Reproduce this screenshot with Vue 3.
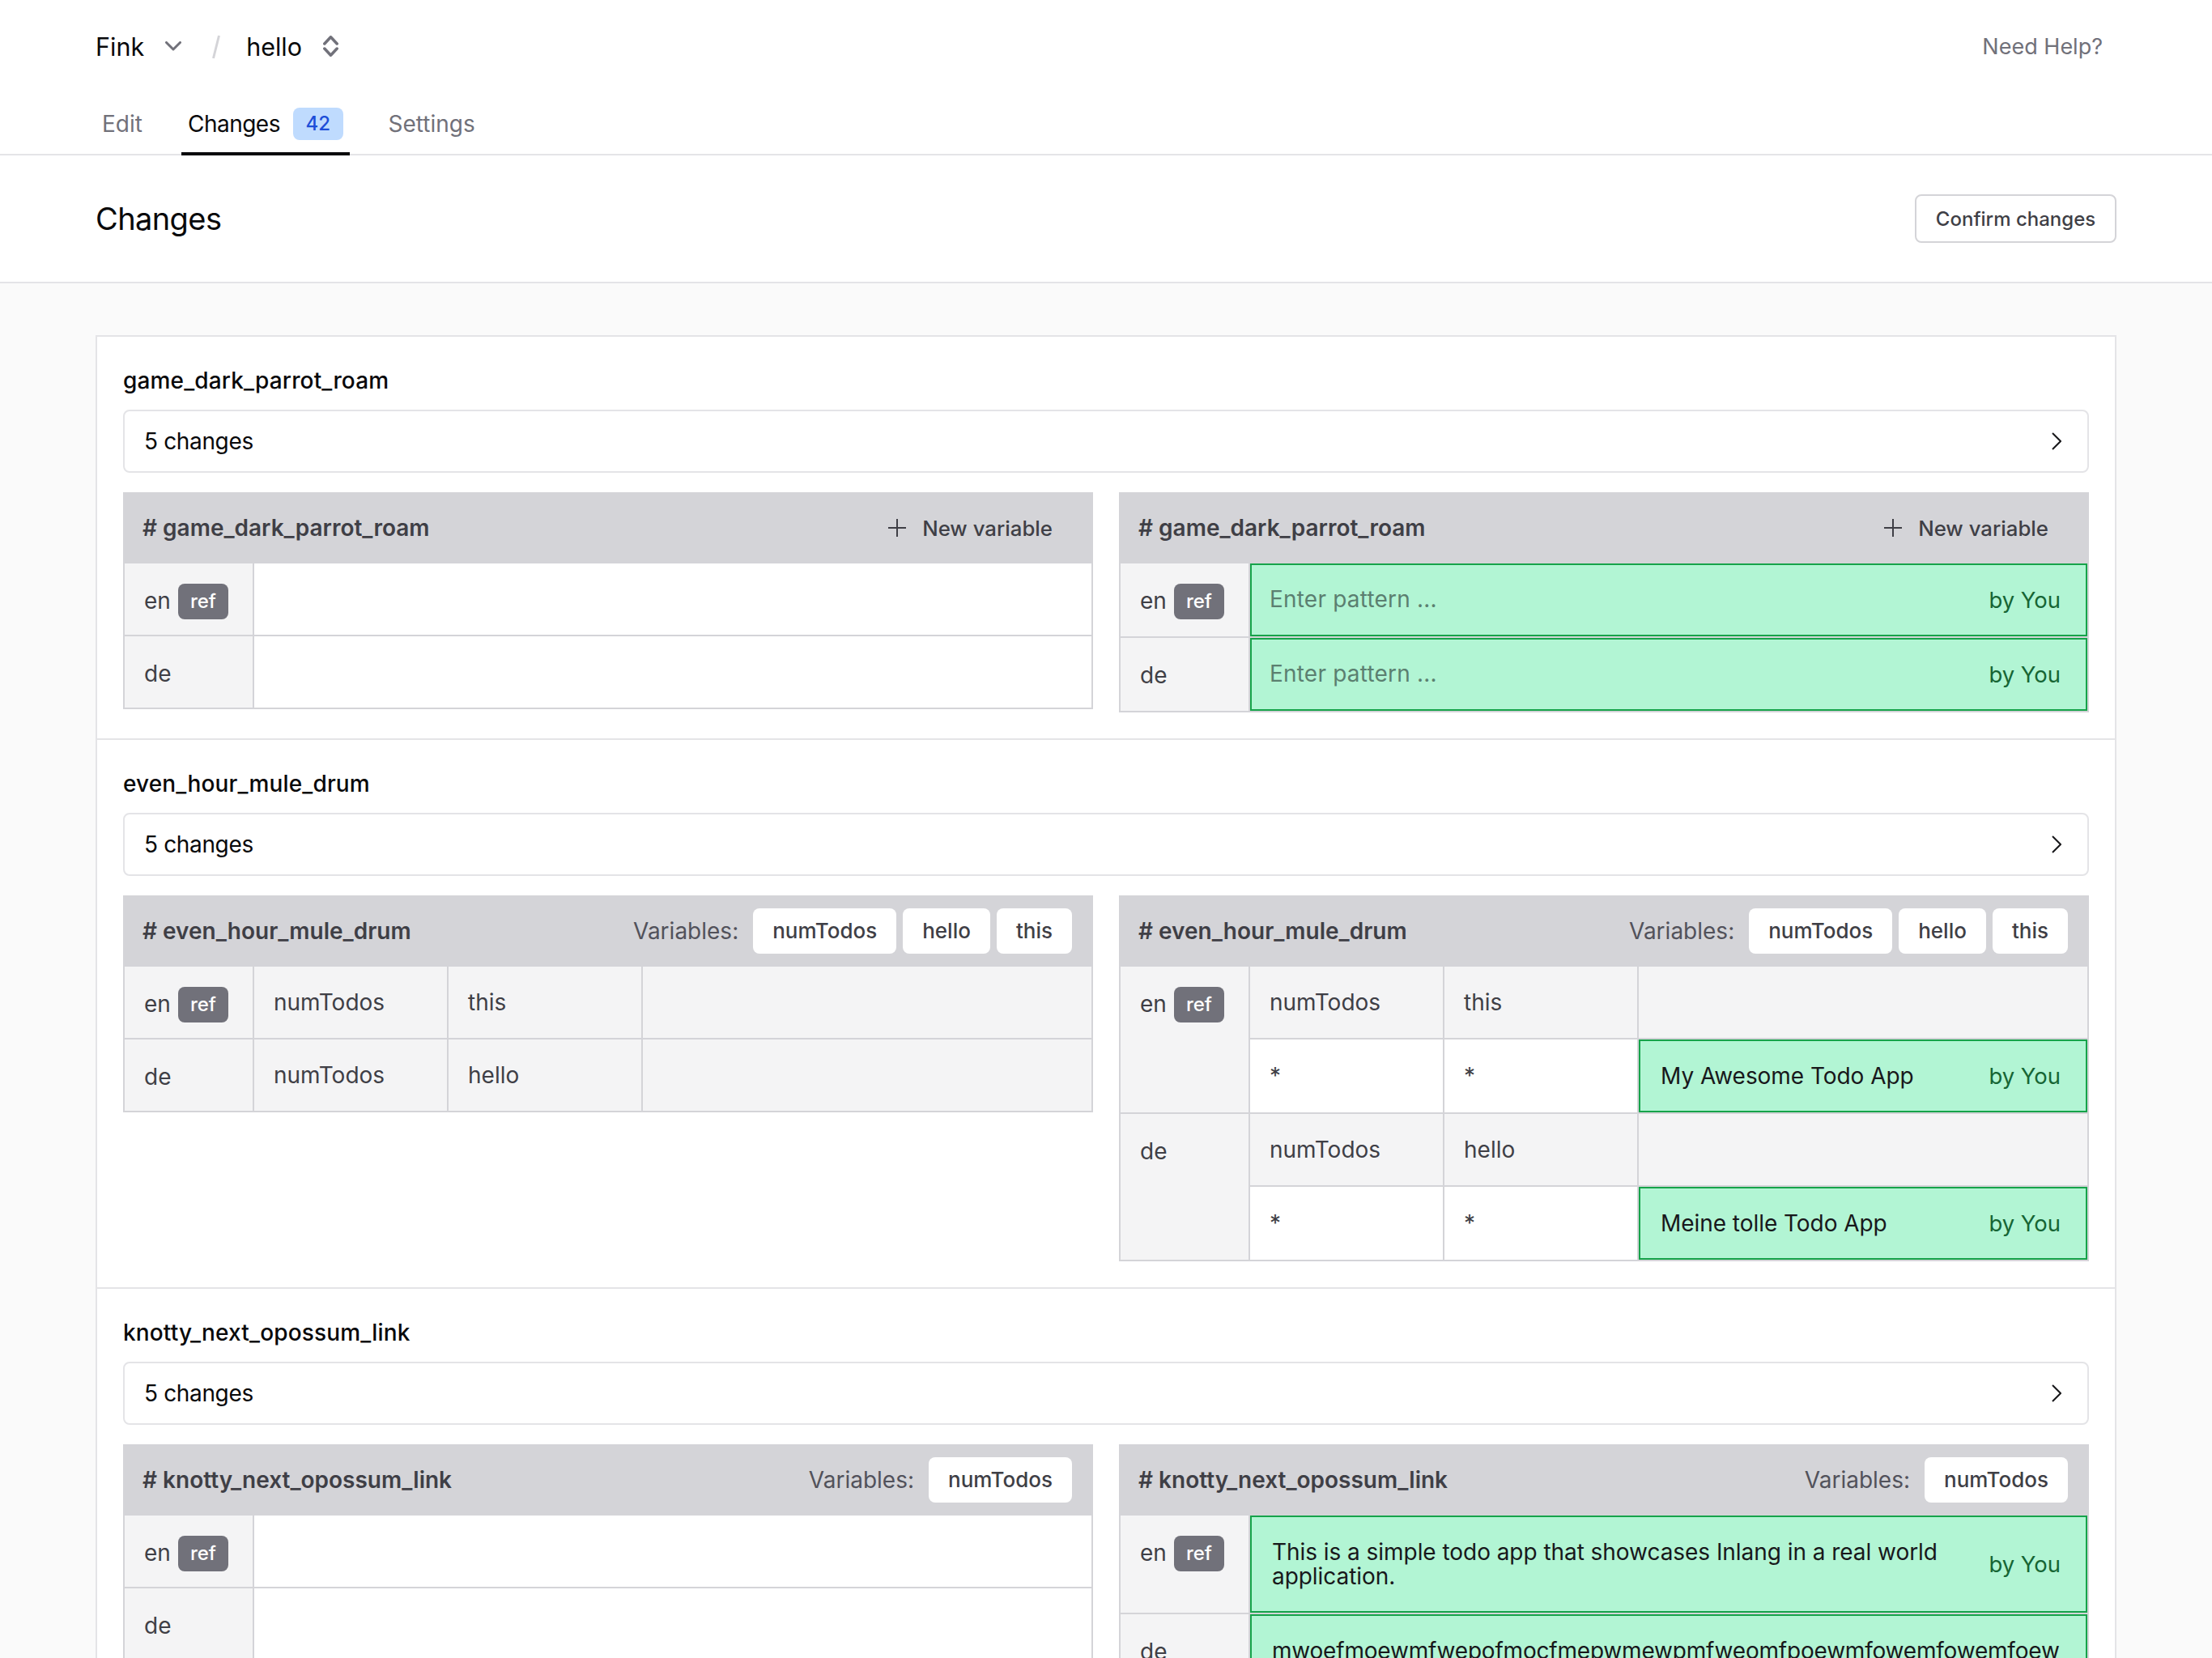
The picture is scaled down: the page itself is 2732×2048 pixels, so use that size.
<script setup>
const tabs = [
  { label: 'Edit' },
  { label: 'Changes', count: 42, active: true },
  { label: 'Settings' },
]

const selector = (...cells) => ({ cells, selector: true })
const edited = (value, cells = [], extra = {}) => ({ cells, value, edited: true, ...extra })
const empty = { cells: [] }

const sections = [
  {
    name: 'game_dark_parrot_roam',
    vars: [],
    before: [
      { lang: 'en', ref: true, rows: [empty] },
      { lang: 'de', rows: [empty] },
    ],
    after: [
      { lang: 'en', ref: true, rows: [edited('Enter pattern ...', [], { placeholder: true })] },
      { lang: 'de', rows: [edited('Enter pattern ...', [], { placeholder: true })] },
    ],
  },
  {
    name: 'even_hour_mule_drum',
    vars: ['numTodos', 'hello', 'this'],
    before: [
      { lang: 'en', ref: true, rows: [selector('numTodos', 'this')] },
      { lang: 'de', rows: [selector('numTodos', 'hello')] },
    ],
    after: [
      { lang: 'en', ref: true, rows: [selector('numTodos', 'this'), edited('My Awesome Todo App', ['*', '*'])] },
      { lang: 'de', rows: [selector('numTodos', 'hello'), edited('Meine tolle Todo App', ['*', '*'])] },
    ],
  },
  {
    name: 'knotty_next_opossum_link',
    vars: ['numTodos'],
    before: [
      { lang: 'en', ref: true, rows: [empty] },
      { lang: 'de', rows: [empty] },
    ],
    after: [
      {
        lang: 'en',
        ref: true,
        rows: [edited('This is a simple todo app that showcases Inlang in a real world application.')],
      },
      {
        lang: 'de',
        rows: [edited('mwoefmoewmfwepofmocfmepwmewpmfweomfpoewmfowemfowemfoew', [], { long: true })],
      },
    ],
  },
]
</script>

<template>
  <div class="page">
    <header class="nav">
      <div class="nav-top">
        <span class="crumb">Fink</span>
        <svg class="chevron-down" width="20" height="12" viewBox="0 0 20 12" fill="none">
          <path d="M1.5 1.5 10 10l8.5-8.5" stroke="#71717a" stroke-width="3" stroke-linecap="round" stroke-linejoin="round" />
        </svg>
        <svg class="slash" width="10" height="30" viewBox="0 0 10 30" fill="none">
          <path d="M8.5 1 1.5 29" stroke="#d4d4d8" stroke-width="3" />
        </svg>
        <span class="crumb">hello</span>
        <svg class="updown" width="19" height="26" viewBox="0 0 19 26" fill="none">
          <path d="M1.8 10 9.5 1.8l7.7 8.2M1.8 16l7.7 8.2 7.7-8.2" stroke="#71717a" stroke-width="3.5" stroke-linecap="round" stroke-linejoin="round" />
        </svg>
        <a class="help">Need Help?</a>
      </div>
      <nav class="tabs">
        <div v-for="tab in tabs" :key="tab.label" :class="['tab', { active: tab.active }]">
          {{ tab.label }}
          <span v-if="tab.count" class="count">{{ tab.count }}</span>
        </div>
      </nav>
    </header>

    <div class="title-bar">
      <h1>Changes</h1>
      <button class="confirm">Confirm changes</button>
    </div>

    <main class="content">
      <div class="card">
        <section v-for="section in sections" :key="section.name" class="section">
          <h2>{{ section.name }}</h2>
          <div class="accordion">
            <span>5 changes</span>
            <svg width="12" height="22" viewBox="0 0 12 22" fill="none">
              <path d="M1 1l10 10L1 21" stroke="#18181b" stroke-width="2" />
            </svg>
          </div>

          <div class="compare">
            <div v-for="side in ['before', 'after']" :key="side" class="table">
              <div class="table-head">
                <span class="message-id"># {{ section.name }}</span>
                <div v-if="section.vars.length" class="vars">
                  <span class="vars-label">Variables:</span>
                  <span v-for="name in section.vars" :key="name" class="var">{{ name }}</span>
                </div>
                <div v-else class="new-var">
                  <svg width="22" height="22" viewBox="0 0 22 22" fill="none">
                    <path d="M11 0v22M0 11h22" stroke="#3f3f46" stroke-width="2" />
                  </svg>
                  New variable
                </div>
              </div>

              <div v-for="item in section[side]" :key="item.lang" class="lang">
                <div class="lang-name">
                  <span>{{ item.lang }}</span>
                  <span v-if="item.ref" class="ref">ref</span>
                </div>
                <div class="lang-rows">
                  <div v-for="(row, i) in item.rows" :key="i" :class="['row', { selector: row.selector }]">
                    <div v-for="(cell, j) in row.cells" :key="j" class="cell">{{ cell }}</div>
                    <div :class="['value', { edited: row.edited, long: row.long }]">
                      <template v-if="row.edited">
                        <span :class="['pattern', { placeholder: row.placeholder }]">{{ row.value }}</span>
                        <span class="by">by You</span>
                      </template>
                    </div>
                  </div>
                </div>
              </div>
            </div>
          </div>
        </section>
      </div>
    </main>
  </div>
</template>

<style>
html,
body {
  margin: 0;
  background: #fff;
}
#app {
  height: 2048px;
  overflow: hidden;
}
</style>

<style scoped>
.page {
  font-family: Inter, "Liberation Sans", sans-serif;
  font-size: 28px;
  color: #18181b;
}

.nav {
  height: 192px;
  box-sizing: border-box;
  border-bottom: 2px solid #e4e4e7;
}

.nav-top {
  height: 114px;
  display: flex;
  align-items: center;
  padding: 0 135px 0 118px;
}

.crumb {
  font-size: 30.5px;
  color: #09090b;
}

.chevron-down {
  margin-left: 26px;
}

.slash {
  margin: 2px 32px 0 38px;
}

.updown {
  margin-left: 26px;
}

.help {
  margin-left: auto;
  font-size: 27px;
  color: #71717a;
}

.tabs {
  display: flex;
  gap: 40px;
  padding-left: 118px;
  height: 78px;
}

.tab {
  display: flex;
  align-items: center;
  gap: 16px;
  padding: 0 8px;
  color: #71717a;
  box-sizing: border-box;
  height: 78px;
}

.tab.active {
  color: #09090b;
  letter-spacing: -0.5px;
  border-bottom: 4px solid #09090b;
  padding-top: 4px;
}

.count {
  background: #bfdbfe;
  color: #1d4ed8;
  font-size: 24px;
  font-weight: 500;
  letter-spacing: 0;
  line-height: 40px;
  padding: 0 15.5px;
  border-radius: 8px;
}

.title-bar {
  height: 158px;
  box-sizing: border-box;
  display: flex;
  align-items: center;
  justify-content: space-between;
  padding: 0 118px;
  border-bottom: 2px solid #e4e4e7;
}

h1 {
  margin: 0;
  font-size: 38px;
  letter-spacing: -0.6px;
  font-weight: 400;
  color: #09090b;
}

.confirm {
  height: 60px;
  width: 249px;
  padding: 0;
  background: #fff;
  border: 2px solid #d4d4d8;
  border-radius: 8px;
  font-family: inherit;
  font-size: 24px;
  font-weight: 500;
  color: #3f3f46;
}

.content {
  background: #fafafa;
  padding: 64px 118px;
}

.card {
  background: #fff;
  border: 2px solid #e4e4e7;
}

.section {
  padding: 0 32px 32px;
  border-bottom: 2px solid #e4e4e7;
}

h2 {
  margin: 0;
  padding: 37px 0 19px;
  font-size: 28px;
  letter-spacing: 0.15px;
  line-height: 34px;
  font-weight: 500;
  color: #09090b;
}

.accordion {
  height: 78px;
  box-sizing: border-box;
  display: flex;
  align-items: center;
  justify-content: space-between;
  padding: 0 32px 0 24px;
  margin-bottom: 24px;
  border: 2px solid #e4e4e7;
  border-radius: 8px;
  letter-spacing: -0.35px;
  color: #09090b;
}

.compare {
  display: grid;
  grid-template-columns: 1fr 1fr;
  gap: 32px;
  align-items: start;
}

.table {
  border: 2px solid #d4d4d8;
  border-top: 0;
}

.table-head {
  height: 88px;
  margin: 0 -2px;
  background: #d4d4d8;
  display: flex;
  align-items: center;
  justify-content: space-between;
  padding: 0 26px 0 24px;
  color: #3f3f46;
}

.message-id {
  font-weight: 600;
}

.vars {
  display: flex;
  align-items: center;
  gap: 8px;
}

.vars-label {
  color: #52525b;
  margin-right: 10px;
}

.var {
  background: #fff;
  font-size: 26px;
  font-weight: 500;
  line-height: 56px;
  padding: 0 24px;
  border-radius: 8px;
}

.new-var {
  display: flex;
  align-items: center;
  gap: 20px;
  margin-right: 24px;
  font-size: 25.8px;
  font-weight: 500;
}

.lang {
  display: flex;
}

.lang + .lang {
  border-top: 2px solid #d4d4d8;
}

.lang-name {
  flex: 0 0 160px;
  box-sizing: border-box;
  display: flex;
  align-items: flex-start;
  gap: 9px;
  padding: 29px 0 0 24px;
  color: #3f3f46;
  background: #f4f4f5;
  border-right: 2px solid #d4d4d8;
}

.ref {
  background: #71717a;
  color: #fff;
  font-size: 24px;
  font-weight: 500;
  line-height: 44px;
  padding: 0 15px;
  border-radius: 8px;
  margin-top: -4px;
}

.lang-rows {
  flex: 1;
  min-width: 0;
}

.row {
  display: flex;
  min-height: 88px;
}

.row + .row {
  border-top: 2px solid #d4d4d8;
}

.row.selector {
  background: #f4f4f5;
}

.cell {
  flex: 0 0 240px;
  box-sizing: border-box;
  display: flex;
  align-items: center;
  padding-left: 24px;
  color: #3f3f46;
  border-right: 2px solid #d4d4d8;
}

.value {
  flex: 1;
  min-width: 0;
  display: flex;
  align-items: center;
  justify-content: space-between;
  gap: 32px;
}

.value.edited {
  padding: 28px 31px 28px 25px;
  background: #b2f5d4;
  border: 2px solid #16a34a;
  line-height: 30px;
  letter-spacing: -0.05px;
}

.value.long {
  flex-wrap: wrap;
}

.value.long .pattern {
  white-space: nowrap;
  letter-spacing: -0.2px;
}

.pattern.placeholder {
  margin: -2px 0 0 -3px;
  letter-spacing: 0.2px;
  color: #5b7f70;
}

.by {
  flex: none;
  color: #166534;
  font-size: 27.5px;
}
</style>
